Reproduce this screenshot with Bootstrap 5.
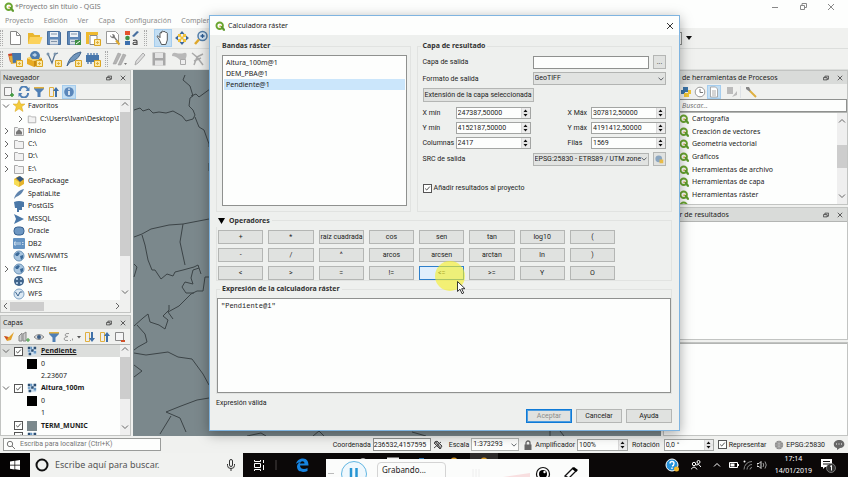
<!DOCTYPE html>
<html lang="es">
<head>
<meta charset="utf-8">
<meta name="viewport" content="width=device-width, initial-scale=1">
<title>*Proyecto sin título - QGIS</title>
<link rel="stylesheet" href="https://cdn.jsdelivr.net/npm/bootstrap@5.3.0/dist/css/bootstrap.min.css">
<style>
body{font-family:"Noto Sans","Open Sans",sans-serif;font-size:7px;line-height:12px;color:#1c1c1c;background:#f0f1ef}
svg{display:block;flex:none}
.ic{width:16px;height:16px}
.ic12{width:12px;height:12px}
.ic10{width:10px;height:10px}
button{font:inherit;color:inherit}
.plain{border:0;background:none;padding:0;display:flex;align-items:center;justify-content:center}
.on{background:#c3def3;outline:1px solid #a5cdee}
.app{height:100vh;display:flex;flex-direction:column;overflow:hidden}
.titlebar{height:14px;background:#fdfefd;color:#777;gap:1px}
.titlebar .winbtns{gap:18px}
.menus{height:14px;background:#fdfefd;gap:10px;padding-left:5px}
.menus a{color:#8b8b8b;text-decoration:none}
.tools{height:21px;border-bottom:1px solid #dcdedc}
.grip{width:3px;height:16px;border-left:1px dotted #aaa;border-right:1px dotted #aaa;flex:none}
.seven{width:133px}
.five{width:94px}
.g3{gap:3px}
.g2{gap:2px}
.work{display:grid;grid-template-columns:131px minmax(0,1fr) 185px;column-gap:2px}
.docks{display:grid;grid-template-rows:243fr 121fr;row-gap:2px}
.docks-r{display:grid;grid-template-rows:135fr 133fr 94fr;row-gap:2px}
.dock{display:flex;flex-direction:column;min-height:0;border:1px solid #c2c4c2}
.dockhead{height:13px;background:#d9dbd9;padding:0 4px 0 2px;flex:none}
.docktools{height:15px;flex:none;padding-left:2px}
.tree{display:flex;flex:1;min-height:0;background:#fdfefd;border-top:1px solid #b3b5b3}
.rows{flex:1;min-width:0;display:flex;flex-direction:column;overflow:hidden}
.rows>div{flex:1 1 0;display:flex;align-items:center;white-space:nowrap;min-height:0;gap:3px;padding-left:1px}
.rows>.sub{padding-left:15px;overflow:hidden}
.lay>div{gap:4px}
.lay>.cls{padding-left:26px}
.lay>.val{padding-left:40px}
.lay>.top{background:#dcdedc}
.rows>.cut{flex:0 0 3px;align-items:flex-start;overflow:hidden}
.alg>div{padding-left:15px}
.chev{width:8px;height:8px;stroke:#666;fill:none;stroke-width:1}
.chev.lite{stroke:#fff}
.gap8{width:8px;flex:none}
.vbar{width:10px;background:#efefef;display:flex;flex-direction:column;align-items:center;flex:none}
.vbar i{width:10px;background:#cdcdcd;display:block}
.hbar{height:12px;background:#f0f1ef;flex:none;padding:0 1px}
.hbar i{width:34px;height:9px;background:#cdcdcd}
.map{background:#7b888c;overflow:hidden}
.map svg{width:528px;height:366px}
.field{border:1px solid #8f918f;background-color:#fdfefd;font-size:7px;line-height:9px;padding:0 2px;border-radius:0;color:#1c1c1c;min-width:0;height:13px;min-height:0}
.form-select.field{background-color:#e1e3e1;border-color:#b2b4b2;background-size:6px 6px;background-position:right 1px center;background-repeat:no-repeat;padding:0 7px 0 1px}
.form-select.field.white{background-color:#fdfefd}
.spin{display:flex;border:1px solid #a3a5a3;background:#fdfefd;height:12px;min-width:0}
.spin input{border:0;flex:1;min-width:0;width:20px;padding:0 0 0 1px;background:none;font:inherit;line-height:10px;color:#1c1c1c}
.spin svg{width:9px;height:10px;background:#ececec}
.form-check-input.tick{width:9px;height:9px;border:1px solid #555;border-radius:0;margin:0;flex:none;background-color:#fdfefd}
.form-check-input.tick:checked{background-color:#fdfefd;border-color:#555;background-image:url("data:image/svg+xml,%3Csvg xmlns='http://www.w3.org/2000/svg' viewBox='0 0 9 9'%3E%3Cpath d='M1.5 4.5l2 2L7.5 2' fill='none' stroke='%23222' stroke-width='1'/%3E%3C/svg%3E")}
.status,.dlg{font-family:Roboto,"Liberation Sans",sans-serif}
.status input,.status select,.dlg input,.dlg select{font-family:inherit}
.status{height:17px;flex:none;padding:0 3px;background:#f0f1ef}
.w-co{width:58px}.w-es{width:48px}.w-am{width:51px}.w-ro{width:50px}
.ml2{margin-left:2px}.ml4{margin-left:4px}.ml6{margin-left:6px}.mr2{margin-right:2px}
.locator{width:158px;border-color:#9a9c9a}
.locator input,.search input{border:0;background:none;font:inherit;padding:0;min-width:0;flex:1;outline:0}
.search{padding-left:17px}
.taskbar{height:24px;flex:none;background:#0b0808;color:#fff}
.start{width:30px;background:#050303;height:24px}
.cortana{width:213px;background:#f1f2f0;color:#555;height:24px;font-size:9px;padding:0 8px 0 5px}
.cortana input{border:0;background:none;font:inherit;padding:0;min-width:0;flex:1}
.cortana input::placeholder{color:#555;opacity:1}
.divider{width:2px;height:10px;background:#2a2626;margin:0 18px 0 10px}
.dlg{position:absolute;left:209px;top:15px;width:471px;height:416px;border:1px solid #7fb4e0;background:#eef0ee;box-shadow:0 3px 12px rgba(0,0,0,.35);display:flex;flex-direction:column}
.dlghead{height:19px;background:#fdfefd;padding:0 5px;flex:none;gap:3px;font-family:"Noto Sans",sans-serif}
.dlgbody{padding:5px 7px 7px 6px;display:flex;flex-direction:column;flex:1;min-height:0}
.pair{display:grid;grid-template-columns:195fr 256fr;column-gap:6px;height:172px}
.grp{border:1px solid #e1e3e1;margin:6px 0 0;padding:0 5px;position:relative;display:flex;flex-direction:column;min-width:0}
.grp>h2{font-family:"Noto Sans",sans-serif;font-size:7px;font-weight:700;line-height:12px;margin:-7px auto 3px -2px;padding:0 2px;background:#eef0ee;color:#333}
.grp>h2.fold{margin-top:-10px;margin-left:-6px}
.grp>h2.inset{margin-left:3px}
.bands{background:#fdfefd;border:1px solid #8f918f;border-radius:0;flex:1;margin:0 -2px 5px 0;padding:1px}
.bands button{border:0;padding:0 2px;font-family:"Noto Sans",sans-serif;font-size:7px;line-height:10px;height:11px;background:none;color:#1c1c1c;text-align:left}
.bands button.sel{background:#cbe6fb}
.b7{border:1px solid #b4b6b4;background:#e0e2e0;border-radius:0;font-size:7px;line-height:10px;padding:0 1px;color:#1c1c1c;height:14px;white-space:nowrap}
.b7.sq{width:13px}
.b7.def{border:1px solid #0f7ad6;box-shadow:inset 0 0 0 1px #4c9de0;color:#8b8d8b}
.b7.hot{border-color:#2d7fcb;background:#e0effc}
.lab{width:110px;flex:none}
.fr{display:flex;align-items:center}
.up3{margin-top:3px}
.ext{display:grid;grid-template-columns:33px 75px minmax(0,1fr) 75px;row-gap:3px;align-items:center;margin-top:5px}
.ext .second{padding-left:37px;white-space:nowrap}
.ops{display:grid;grid-template-columns:repeat(8,minmax(0,1fr));gap:4px 5px;width:397px;margin-left:-4px}
.expr{font-family:"Liberation Mono",monospace;font-size:7px;line-height:9px;border:1px solid #8f918f;background:#fdfefd;resize:none;border-radius:0;padding:3px;flex:1;margin:0;min-height:0;color:#1c1c1c}
.actions button{width:46px}
.halo{position:absolute;left:225px;top:245px;width:30px;height:30px;border-radius:50%;background:rgba(246,240,40,.62);pointer-events:none}
.ptr{position:absolute;left:247px;top:265px;width:9px;height:14px}
.rec{position:absolute;left:326px;top:459px;width:263px;height:18px;overflow:hidden;background:#fbfcfb;display:flex;align-items:flex-start;color:#222;font-size:8px}
.recbox{border:1px solid #d4d4d4;border-radius:4px;width:69px;height:22px;margin:3px 0 0 9px;padding-left:4px;line-height:13px}
.recgrip{width:6px;height:6px;border-top:1px solid #bbb;border-bottom:1px solid #bbb;margin:14px 0 0 2px}
.clock{line-height:12px;text-align:center}
</style>
<script src="https://cdn.jsdelivr.net/npm/bootstrap@5.3.0/dist/js/bootstrap.bundle.min.js"></script>
</head>
<body>
<svg width="0" height="0" class="position-absolute" aria-hidden="true">
<defs>
<symbol id="q" viewBox="0 0 16 16"><circle cx="7.5" cy="7.5" r="5.2" fill="none" stroke="#6aa52f" stroke-width="3"/><path d="M8 8h3.500l4.500 5v2.500h-3z" fill="#5d9a2c"/><path d="M7 7l3.500 0-3.500 3.500z" fill="#e8a33a"/></symbol>
<symbol id="plus" viewBox="0 0 16 16"><path d="M9.500 9.500h6v6h-6z" fill="#fbe9a8" stroke="#dba520"/><path d="M12.500 11v3M11 12.500h3" stroke="#e0b040"/></symbol>
<symbol id="new" viewBox="0 0 16 16"><path d="M3.500 1.500h6l4 4v9h-10z" fill="#fff" stroke="#888"/><path d="M9.500 1.500v4h4" fill="none" stroke="#888"/></symbol>
<symbol id="open" viewBox="0 0 16 16"><path d="M1 3h5l1.500 2H13v9H1z" fill="#e9b62f"/><path d="M3 7h12.500L13 14H1z" fill="#fbd25c"/></symbol>
<symbol id="save" viewBox="0 0 16 16"><path d="M1.500 1.500h12l1 1v12h-13z" fill="#5f88b8" stroke="#466d9b"/><path d="M4 2h8v5H4z" fill="#eef3f8"/><path d="M4 9.500h8v5H4z" fill="#d9dfe6"/><path d="M5 4h6M5 11.500h6" stroke="#8294a8"/></symbol>
<symbol id="gsave" viewBox="0 0 16 16"><path d="M1.500 1.500h12l1 1v12h-13z" fill="#a8a8a8"/><path d="M4 2h8v5H4zM4 9.500h8v5H4z" fill="#e4e4e4"/></symbol>
<symbol id="folder" viewBox="0 0 12 12"><path d="M1.500 2.500h3l1 1h5v7h-9z" fill="#f2f2f2" stroke="#aaa"/></symbol>
<symbol id="filter" viewBox="0 0 12 12"><path d="M1 1h10v2L7.500 6.500V11l-3 0V6.500L1 3z" fill="#4f7fb5"/><path d="M1 1h10v1.500H1z" fill="#e0b040"/></symbol>
<symbol id="collapse" viewBox="0 0 12 12"><path d="M1.500 1.500h4v9h-4z" fill="#eee" stroke="#e0b040"/><path d="M8 1l3 4H9v6H7V5H5z" fill="#3f70a8"/></symbol>
<symbol id="expand" viewBox="0 0 12 12"><path d="M1.500 1.500h4v9h-4z" fill="#eee" stroke="#e0b040"/><path d="M8 11l3-4H9V1H7v6H5z" fill="#3f70a8"/></symbol>
<symbol id="addl" viewBox="0 0 12 12"><path d="M1.500 1.500h7v8h-7z" fill="#f5f5f5" stroke="#888"/><path d="M9 7v4M7 9h4" stroke="#3c9a3c" stroke-width="1.500"/></symbol>
<symbol id="rem" viewBox="0 0 12 12"><path d="M1.500 1.500h8v8h-8z" fill="#f5f5f5" stroke="#888"/><path d="M7 10h4" stroke="#d0502a" stroke-width="2"/></symbol>
<symbol id="globe" viewBox="0 0 12 12"><circle cx="6" cy="6" r="5" fill="#a9c6e0" stroke="#6d94b8"/><path d="M2 4l3-2 2 1-2 3-2 0zM7 6l3-1v3l-2 2z" fill="#3b6a99"/></symbol>
<symbol id="rst" viewBox="0 0 12 12"><path d="M1 1h10v10H1z" fill="#cfe0ee"/><path d="M1 1h3v3H1zM5 4h3v3H5zM8 1h3v3H8zM2 8h3v3H2z" fill="#2c4f74"/><path d="M4 1h2v3H4zM8 6h3v3H8zM1 5h3v2H1z" fill="#6797c4"/></symbol>
<symbol id="r" viewBox="0 0 8 8"><path d="M3 1l3 3-3 3"/></symbol>
<symbol id="d" viewBox="0 0 8 8"><path d="M1 2.500l3 3 3-3"/></symbol>
<symbol id="u" viewBox="0 0 8 8"><path d="M1 5.500l3-3 3 3"/></symbol>
<symbol id="l" viewBox="0 0 8 8"><path d="M5 1L2 4l3 3"/></symbol>
<symbol id="flt" viewBox="0 0 8 8"><path d="M2.500 1.500h5v4h-5z" fill="none" stroke="#333"/><path d="M.5 3.500h5v3h-5z" fill="#d9dbd9" stroke="#333"/></symbol>
<symbol id="x" viewBox="0 0 8 8"><path d="M1 1l6 6M7 1L1 7" stroke="#333" fill="none"/></symbol>
<symbol id="ud" viewBox="0 0 9 10"><path d="M4.500 1.500l2 2.500h-4zM4.500 8.500l2-2.500h-4z" fill="#111"/><path d="M.5 0v10M1 5h8" stroke="#ccc" stroke-width=".6"/></symbol>
</defs>
</svg>

<div class="app">
<header>
<div class="titlebar d-flex align-items-center ps-1">
<svg class="ic10"><use href="#q"/></svg><span>*Proyecto sin título - QGIS</span>
<div class="winbtns d-flex ms-auto pe-2 me-1">
<button class="plain" aria-label="Minimizar"><svg class="ic10" viewBox="0 0 10 10"><path d="M2 5.500h6" stroke="#888"/></svg></button>
<button class="plain" aria-label="Restaurar"><svg class="ic10" viewBox="0 0 10 10"><path d="M2.500 3.500h4v4h-4zM4 3V1.500h4.500v4H7" fill="none" stroke="#888"/></svg></button>
<button class="plain" aria-label="Cerrar"><svg class="ic10" viewBox="0 0 10 10"><path d="M2 2l6 6M8 2L2 8" stroke="#888"/></svg></button>
</div>
</div>
<nav class="menus d-flex align-items-center"><a href="#">Proyecto</a><a href="#">Edición</a><a href="#">Ver</a><a href="#">Capa</a><a href="#">Configuración</a><a href="#">Complementos</a></nav>
<div class="tools d-flex align-items-center">
<span class="grip me-1"></span>
<div class="seven d-flex justify-content-between">
<button class="plain" aria-label="Nuevo"><svg class="ic"><use href="#new"/></svg></button>
<button class="plain" aria-label="Abrir"><svg class="ic"><use href="#open"/></svg></button>
<button class="plain" aria-label="Guardar"><svg class="ic"><use href="#save"/></svg></button>
<button class="plain" aria-label="Guardar como"><svg class="ic" viewBox="0 0 16 16"><use href="#save" width="16" height="16"/><path d="M9 10h6v5H9z" fill="#3f8f45"/><path d="M10 14l4-3" stroke="#fff"/></svg></button>
<button class="plain" aria-label="Nueva composición"><svg class="ic" viewBox="0 0 16 16"><path d="M1 2h12v3H1z" fill="#efb92e"/><path d="M1 2h3v12H1z" fill="#efb92e"/><path d="M5 5.500h7v9H5z" fill="#fff" stroke="#888"/><use href="#plus" width="16" height="16"/></svg></button>
<button class="plain" aria-label="Administrador"><svg class="ic" viewBox="0 0 16 16"><path d="M1.500 1.500h9l3 3v9h-12z" fill="#fff" stroke="#999"/><path d="M5 5a3 3 0 004 3l4 5 1-1-4-5A3 3 0 007 4l1 2-1 1z" fill="#777"/><path d="M11 10.500l3.500 4" stroke="#e0a92c" stroke-width="2"/></svg></button>
<button class="plain" aria-label="Estilos"><svg class="ic" viewBox="0 0 16 16"><path d="M1 1h5v4H1z" fill="#e5532d"/><circle cx="3.500" cy="8" r="2.300" fill="#3f9143"/><path d="M1 11h5v4H1z" fill="#3c6fae"/><path d="M8 6l5-5 2 1-5 5z" fill="#476f9f"/><path d="M9 10.500q4-1 4 1v3.500M13 12q-4 0-4 1.600t4 .4" fill="none" stroke="#444" stroke-width="1.100"/></svg></button>
</div>
<span class="grip ms-1 me-1"></span>
<div class="d-flex g3 ps-1">
<button class="plain on" aria-label="Desplazar"><svg class="ic" viewBox="0 0 16 16"><path d="M4 9L2 6.500l1-.8 2 2V3l1-.5.700.5V1.500L8 1l.8.8L10 1.500l.7 1 1 0 .6.800V10l-1.500 4.500H6.500z" fill="#fff" stroke="#333" stroke-width=".8"/></svg></button>
<button class="plain" aria-label="Centrar"><svg class="ic" viewBox="0 0 16 16"><path d="M8 1l2.500 3h-5zM8 15l2.500-3h-5zM1 8l3-2.500v5zM15 8l-3-2.500v5z" fill="#3c689c"/><path d="M4 4h3v3H4zM9 4h3v3H9zM4 9h3v3H4zM9 9h3v3H9zM6.500 6.500h3v3h-3z" fill="#f0c23c"/></svg></button>
<button class="plain" aria-label="Acercar"><svg class="ic" viewBox="0 0 16 16"><circle cx="9.500" cy="6" r="4.500" fill="#d8e7f4" stroke="#5580aa" stroke-width="1.500"/><path d="M9.500 4v4M7.500 6h4" stroke="#2c5c92" stroke-width="1.300"/><path d="M6 9.500L2 14" stroke="#e0a92c" stroke-width="2.500"/></svg></button>
</div>
<div class="ms-auto me-5 pe-5 d-flex align-items-center"><span class="field d-block border-start-0 me-1"></span><button class="plain me-5 pe-2" aria-label="Más"><svg class="me-1" width="6" height="4" viewBox="0 0 6 4"><path d="M0 0h6L3 4z" fill="#111"/></svg></button></div>
</div>
<div class="tools d-flex align-items-center">
<span class="grip me-1"></span>
<div class="five d-flex justify-content-between">
<button class="plain" aria-label="Fuentes"><svg class="ic" viewBox="0 0 16 16"><path d="M1 3l6-1 2 8-6 1z" fill="#c9452b"/><path d="M2 5l8-1 1 8-7 1z" fill="#e4ac36"/><path d="M5 2l9 0v9l-8 1z" fill="#4776ab"/><use href="#plus" width="16" height="16"/></svg></button>
<button class="plain" aria-label="GeoPackage"><svg class="ic" viewBox="0 0 16 16"><path d="M0 7l7 3v6l-7-3z" fill="#e8ab22"/><path d="M7 10l8-3v6l-8 3z" fill="#c98a13"/><path d="M0 7l7-3 8 3-8 3z" fill="#f6d060"/><path d="M3 5a4.500 4.500 0 0110 0l-1 3H5z" fill="#4b79ab"/><path d="M5 4l3-2 2 2-2 2z" fill="#b8d0e6"/><use href="#plus" width="16" height="16"/></svg></button>
<button class="plain" aria-label="Shapefile"><svg class="ic" viewBox="0 0 16 16"><path d="M2 3l4 9 3-9 3-1" fill="none" stroke="#54708f" stroke-width="1.200"/><circle cx="2" cy="3" r="1.500" fill="#7c95ad"/><circle cx="9" cy="3" r="1.500" fill="#7c95ad"/><use href="#plus" width="16" height="16"/></svg></button>
<button class="plain" aria-label="SpatiaLite"><svg class="ic" viewBox="0 0 16 16"><path d="M1 15C3 7 8 2 15 1 13 7 9 10 4 11z" fill="#7096bd" stroke="#41648b"/><use href="#plus" width="16" height="16"/></svg></button>
<button class="plain" aria-label="Memoria"><svg class="ic" viewBox="0 0 16 16"><path d="M1 4h13v7H1z" fill="#4776ab"/><path d="M3 2v2M6 2v2M9 2v2M12 2v2M3 11v2M6 11v2" stroke="#4776ab" stroke-width="1.300"/><use href="#plus" width="16" height="16"/></svg></button>
</div>
<span class="grip ms-1 me-1"></span>
<div class="five d-flex justify-content-between">
<button class="plain" aria-label="Ediciones"><svg class="ic" viewBox="0 0 16 16"><path d="M1 13L6 2l3 1-5 10zM6 14l5-11 3 1-5 10z" fill="#b3b3b3" stroke="#999" stroke-width=".5"/><path d="M12 12h3l-1.500 2z" fill="#777"/></svg></button>
<button class="plain" aria-label="Editar"><svg class="ic" viewBox="0 0 16 16"><path d="M3 14l1-4 7-8 2 2-7 8z" fill="#ddd" stroke="#aaa"/></svg></button>
<button class="plain" aria-label="Guardar ediciones"><svg class="ic"><use href="#gsave"/></svg></button>
<button class="plain" aria-label="Añadir"><svg class="ic" viewBox="0 0 16 16"><path d="M1 5q0-4 4-3t8 0 2 5-6 2-8-4z" fill="#b8b8b8"/><path d="M9.500 8.500h5v5h-5z" fill="#eee" stroke="#aaa"/></svg></button>
<button class="plain" aria-label="Nodos"><svg class="ic" viewBox="0 0 16 16"><path d="M2 2l5 4 6-3M7 6l-3 8M7 6l6 8M11 7l-7 3" fill="none" stroke="#aaa" stroke-width="1.500"/></svg></button>
</div>
</div>
</header>

<main class="work flex-grow-1 overflow-hidden">
<div class="docks">
<section class="dock">
<div class="dockhead d-flex align-items-center"><span>Navegador</span><span class="ms-auto d-flex gap-2"><button class="plain" aria-label="Flotar"><svg width="6" height="6"><use href="#flt"/></svg></button><button class="plain" aria-label="Cerrar"><svg width="6" height="6"><use href="#x"/></svg></button></span></div>
<div class="docktools d-flex align-items-center g3">
<button class="plain" aria-label="Añadir"><svg class="ic12"><use href="#addl"/></svg></button>
<button class="plain" aria-label="Actualizar"><svg class="ic12" viewBox="0 0 12 12"><path d="M2 5a4 4 0 018-1M10 7a4 4 0 01-8 1" fill="none" stroke="#4f7fb5" stroke-width="2"/><path d="M11.500 1v4h-4zM.5 11V7h4z" fill="#4f7fb5"/></svg></button>
<button class="plain" aria-label="Filtrar"><svg class="ic12"><use href="#filter"/></svg></button>
<button class="plain" aria-label="Contraer"><svg class="ic12"><use href="#collapse"/></svg></button>
<button class="plain on" aria-label="Propiedades"><svg class="ic12" viewBox="0 0 12 12"><circle cx="6" cy="6" r="4.800" fill="#5b87bb"/><path d="M6 2.500v1.200M6 5v4" stroke="#fff" stroke-width="1.500"/></svg></button>
</div>
<div class="tree">
<div class="rows">
<div><svg class="chev"><use href="#d"/></svg><svg class="ic12" viewBox="0 0 12 12"><path d="M6 0l1.700 4H12L8.700 6.800 10 11.500 6 8.800 2 11.500l1.300-4.700L0 4h4.300z" fill="#f3cb3c" stroke="#d9a520" stroke-width=".5"/></svg>Favoritos</div>
<div class="sub"><svg class="chev"><use href="#r"/></svg><svg class="ic10"><use href="#folder"/></svg>C:\Users\Ivan\Desktop\I</div>
<div><svg class="chev"><use href="#r"/></svg><svg class="ic12" viewBox="0 0 12 12"><use href="#folder" width="12" height="12"/><path d="M3 7l3-3 3 3v2.500H3z" fill="#777"/></svg>Inicio</div>
<div><svg class="chev"><use href="#r"/></svg><svg class="ic12"><use href="#folder"/></svg>C:\</div>
<div><svg class="chev"><use href="#r"/></svg><svg class="ic12"><use href="#folder"/></svg>D:\</div>
<div><svg class="chev"><use href="#r"/></svg><svg class="ic12"><use href="#folder"/></svg>E:\</div>
<div><span class="gap8"></span><svg class="ic12" viewBox="0 0 12 12"><path d="M1 4l5-3 5 3v5l-5 3-5-3z" fill="#e5b32a"/><path d="M1 4l5 3v5l-5-3z" fill="#f6dd55"/><path d="M3 3l4-2 4 3-4 3z" fill="#35587f"/></svg>GeoPackage</div>
<div><span class="gap8"></span><svg class="ic12" viewBox="0 0 12 12"><path d="M1 11C2 6 6 2 11 1 9 6 6 8 3 9z" fill="#5f84ad"/></svg>SpatiaLite</div>
<div><span class="gap8"></span><svg class="ic12" viewBox="0 0 12 12"><path d="M1 2q5-2 10 0v5H9v3H6l0 2H4V8H2z" fill="#4a78a8"/></svg>PostGIS</div>
<div><span class="gap8"></span><svg class="ic12" viewBox="0 0 12 12"><path d="M1 1l10 5-10 5 2-5z" fill="#4a78a8"/></svg>MSSQL</div>
<div><span class="gap8"></span><svg class="ic12" viewBox="0 0 12 12"><rect x="1" y="2" width="10" height="8" rx="3.500" fill="#6d97c2" stroke="#355f8d"/></svg>Oracle</div>
<div><span class="gap8"></span><svg class="ic12" viewBox="0 0 12 12"><rect x="0" y="0" width="12" height="11" rx="1" fill="#6493c2"/><path d="M1.500 4v3h1.500V4zM5 4v3M7 4v3M9 4.500h1.500M9 6.500h1.500" fill="none" stroke="#dbe7f2" stroke-width=".8"/></svg>DB2</div>
<div><span class="gap8"></span><svg class="ic12"><use href="#globe"/></svg>WMS/WMTS</div>
<div><svg class="chev"><use href="#r"/></svg><svg class="ic12"><use href="#globe"/></svg>XYZ Tiles</div>
<div><span class="gap8"></span><svg class="ic12" viewBox="0 0 12 12"><circle cx="6" cy="6" r="5" fill="#3f648c"/><path d="M3 3h2v2H3zM7 3h2v2H7zM3 7h2v2H3zM7 7h2v2H7z" fill="#a9c4dd"/></svg>WCS</div>
<div><span class="gap8"></span><svg class="ic12" viewBox="0 0 12 12"><circle cx="6" cy="6" r="5" fill="#dbe8f3" stroke="#7fa3c5"/><path d="M2.500 4L5 8l2-4 2.500 0" fill="none" stroke="#3e668f"/></svg>WFS</div>
</div>
<div class="vbar"><svg class="chev mb-1"><use href="#u"/></svg><i class="flex-grow-1 mb-4"></i><svg class="chev mt-2 mb-1"><use href="#d"/></svg></div>
</div>
<div class="hbar d-flex align-items-center"><svg class="chev"><use href="#l"/></svg><i></i><svg class="chev ms-auto me-2"><use href="#r"/></svg></div>
</section>
<section class="dock">
<div class="dockhead d-flex align-items-center"><span>Capas</span><span class="ms-auto d-flex gap-2"><button class="plain" aria-label="Flotar"><svg width="6" height="6"><use href="#flt"/></svg></button><button class="plain" aria-label="Cerrar"><svg width="6" height="6"><use href="#x"/></svg></button></span></div>
<div class="docktools d-flex align-items-center g3">
<button class="plain" aria-label="Estilo"><svg class="ic12" viewBox="0 0 12 12"><path d="M1 5l5 1 5-5-3 8-4 1z" fill="#e2a22c"/><path d="M1 5l4 1-1 3z" fill="#c9452b"/></svg></button>
<button class="plain" aria-label="Grupo"><svg class="ic12" viewBox="0 0 12 12"><path d="M1 10V5l3-3v8zM5 10V3l3-2v9z" fill="#ccc" stroke="#888"/><path d="M10 7v4M8 9h4" stroke="#3c9a3c"/></svg></button>
<button class="plain" aria-label="Visibilidad"><svg class="ic12" viewBox="0 0 12 12"><path d="M1 6q5-5 10 0-5 5-10 0z" fill="#ddd" stroke="#888"/><circle cx="6" cy="6" r="2" fill="#3b5d84"/></svg></button>
<button class="plain" aria-label="Filtrar"><svg class="ic12"><use href="#filter"/></svg></button>
<button class="plain" aria-label="Expresión"><svg width="18" height="10" viewBox="0 0 18 10"><path d="M6 1.500Q2 1 2 3q0 1.500 3 1.500Q1 5 1 7t4 1.500M7 8.500h1M9.500 6.500v2" fill="none" stroke="#999"/><path d="M14 4h4l-2 2.500z" fill="#555"/></svg></button>
<button class="plain" aria-label="Expandir"><svg class="ic12"><use href="#expand"/></svg></button>
<button class="plain" aria-label="Contraer"><svg class="ic12"><use href="#collapse"/></svg></button>
<button class="plain" aria-label="Quitar"><svg class="ic12"><use href="#rem"/></svg></button>
</div>
<div class="tree">
<div class="rows lay">
<div class="top"><svg class="chev"><use href="#d"/></svg><input class="form-check-input tick" type="checkbox" checked aria-label="Pendiente"><svg class="ic10"><use href="#rst"/></svg><b class="text-decoration-underline">Pendiente</b></div>
<div class="cls"><svg class="ic10" viewBox="0 0 10 10"><path d="M0 0h10v10H0z"/></svg>0</div>
<div class="val">2.23607</div>
<div><svg class="chev"><use href="#d"/></svg><input class="form-check-input tick" type="checkbox" checked aria-label="Altura_100m"><svg class="ic10"><use href="#rst"/></svg><b>Altura_100m</b></div>
<div class="cls"><svg class="ic10" viewBox="0 0 10 10"><path d="M0 0h10v10H0z"/></svg>0</div>
<div class="val">1</div>
<div><span class="gap8"></span><input class="form-check-input tick" type="checkbox" checked aria-label="TERM_MUNIC"><svg class="ic10" viewBox="0 0 10 10"><path d="M0 0h10v10H0z" fill="#7b888c"/></svg><b>TERM_MUNIC</b></div>
<div class="cut"><span class="gap8"></span><input class="form-check-input tick" type="checkbox" checked aria-label="DEM_PBA"><svg class="ic10"><use href="#rst"/></svg></div>
</div>
<div class="vbar"><svg class="chev mb-1"><use href="#u"/></svg><i class="flex-grow-1 mb-4"></i><svg class="chev mb-1"><use href="#d"/></svg></div>
</div>
</section>
</div>

<div class="map"><svg viewBox="133 70 528 366" fill="none" stroke="#3c4447" stroke-width="1"><path d="M134 110l6-2 3 3 6-2 4 4 6-1 7 1 7-2 9 5 4 5 7-2 2-4-2-5-4-4 1-8 3-2-3-10-7-6 2-5M191 96l5-2 3 3 11-8M195 117l4 10 5 3 5 14v3M209 163v8M134 237l8-3 9-5 18-4 14-1 26-5M142 235l3 10 3 15 4 10 3 0 6 9 6-5 6 2 2-4 8-2 11-3 4-2 3 9M183 224l-3 18 5 23M199 268l-6 2-2 8 2 6-8-2-3 5 4 6 8 0M191 294l6-3 6 0 2-14h4M191 294l-12 12-11 6 5 7M134 264l3 3-3 10M134 326l9-8 5-4 2 8 9 3 6 4 3-9-5-4 6-6 0-5M137 325l8 9 2 8-9 5-4 3M134 353l12 2 22-3 10 5 14 2 11 15 6 11M134 365l8 6-8 6M166 412l15-6 16-6 12-2M166 412l14 6 6 14M171 416l-11 18M247 436l14-3 5 3M313 436l6-5 5 5M412 432l14 4M550 431v5M560 431l4 5"/></svg></div>

<div class="docks-r">
<section class="dock">
<div class="dockhead d-flex align-items-center"><span>Caja de herramientas de Procesos</span><span class="ms-auto d-flex gap-2"><button class="plain" aria-label="Flotar"><svg width="6" height="6"><use href="#flt"/></svg></button><button class="plain" aria-label="Cerrar"><svg width="6" height="6"><use href="#x"/></svg></button></span></div>
<div class="docktools d-flex align-items-center g2 ps-3">
<button class="plain" aria-label="Python"><svg class="ic12" viewBox="0 0 12 12"><path d="M3 1h5v5H5v2H1V4h2z" fill="#3c74a8"/><path d="M8 4h3v4H9v3H4V7h4z" fill="#f1c638"/></svg></button>
<button class="plain" aria-label="Historial"><svg class="ic12" viewBox="0 0 12 12"><circle cx="6" cy="6" r="4.800" fill="#fff" stroke="#999"/><path d="M6 3v3.500h3" fill="none" stroke="#777"/></svg></button>
<button class="plain on" aria-label="Resultados"><svg class="ic12" viewBox="0 0 12 12"><path d="M2.500 1h5l2 2v8h-7z" fill="#fff" stroke="#999" stroke-width=".8"/><path d="M4 5h4M4 7h4M4 9h4" stroke="#aaa"/></svg></button>
<button class="plain ms-1" aria-label="Editar"><svg class="ic12" viewBox="0 0 12 12"><path d="M1 1h6v7H1zM6 11l5-6v4z" fill="#bbb"/></svg></button>
<button class="plain border-start ps-1" aria-label="Opciones"><svg class="ic12" viewBox="0 0 12 12"><path d="M1 1l3 0 2 4-1 1-4-3z" fill="#888"/><path d="M5 5l6 6" stroke="#e0b040" stroke-width="2"/></svg></button>
</div>
<label class="search field d-flex flex-shrink-0"><input class="fst-italic" placeholder="Buscar..." aria-label="Buscar"></label>
<div class="tree">
<div class="rows alg">
<div><svg class="ic10"><use href="#q"/></svg>Cartografía</div>
<div><svg class="ic10"><use href="#q"/></svg>Creación de vectores</div>
<div><svg class="ic10"><use href="#q"/></svg>Geometría vectorial</div>
<div><svg class="ic10"><use href="#q"/></svg>Gráficos</div>
<div><svg class="ic10"><use href="#q"/></svg>Herramientas de archivo</div>
<div><svg class="ic10"><use href="#q"/></svg>Herramientas de capa</div>
<div><svg class="ic10"><use href="#q"/></svg>Herramientas ráster</div>
<div class="cut"><svg class="ic10"><use href="#q"/></svg>Interpolación</div>
</div>
<div class="vbar"><svg class="chev my-1"><use href="#u"/></svg><i class="mt-3 h-25"></i><svg class="chev mt-auto mb-1"><use href="#d"/></svg></div>
</div>
</section>
<section class="dock">
<div class="dockhead d-flex align-items-center"><span>Visor de resultados</span><span class="ms-auto d-flex gap-2"><button class="plain" aria-label="Flotar"><svg width="6" height="6"><use href="#flt"/></svg></button><button class="plain" aria-label="Cerrar"><svg width="6" height="6"><use href="#x"/></svg></button></span></div>
<div class="tree"></div>
</section>
<section class="dock"><div class="tree"></div></section>
</div>
</main>

<footer>
<div class="status d-flex align-items-center">
<label class="locator field d-flex align-items-center"><svg class="ic10 me-1" viewBox="0 0 10 10"><circle cx="4" cy="4" r="2.700" fill="none" stroke="#777"/><path d="M6 6l3 3" stroke="#777"/></svg><input placeholder="Escriba para localizar (Ctrl+K)" aria-label="Localizar"></label>
<label class="ms-auto mr2" for="co">Coordenada</label><input id="co" class="field w-co px-0" value="236532,4157595">
<svg class="ic10 ml2" viewBox="0 0 10 10"><path d="M1 3l3-2 5 5-2 3zM1 8l7-6M2 1l6 8" stroke="#444" fill="#bbb"/></svg>
<label class="ml6 mr2" for="es">Escala</label><select id="es" class="form-select field white w-es"><option>1:373293</option></select>
<svg class="ml4 mr2 ic10" viewBox="0 0 10 10"><path d="M1.500 4.500h7V10h-7z" fill="#666"/><path d="M3 5V3a2 2 0 014 0v2" fill="none" stroke="#666" stroke-width="1.300"/></svg>
<label class="mr2" for="am">Amplificador</label><span class="spin w-am"><input id="am" value="100%"><svg><use href="#ud"/></svg></span>
<label class="ml4" for="ro">Rotación</label><span class="spin ml4 w-ro"><input id="ro" value="0,0 °"><svg><use href="#ud"/></svg></span>
<input id="re" class="form-check-input tick ms-1" type="checkbox" checked><label for="re" class="ml2">Representar</label>
<button class="plain ms-2 g2"><svg class="ic10" viewBox="0 0 10 10"><circle cx="5" cy="5" r="4.200" fill="#888"/><path d="M1 5h8M5 1v8M2 2.500q3 2 6 0M2 7.500q3-2 6 0" stroke="#ccc" stroke-width=".6" fill="none"/></svg>EPSG:25830</button>
<button class="plain ms-2" aria-label="Mensajes"><svg class="ic12" viewBox="0 0 12 12"><path d="M6 1c7 0 7 8 1 8l-3 2V9C-1 8 0 1 6 1z" fill="#666"/><path d="M3 5h1M5.500 5h1M8 5h1" stroke="#fff"/></svg></button>
</div>
<div class="taskbar d-flex align-items-center">
<button class="plain start" aria-label="Inicio"><svg class="ic10" viewBox="0 0 10 10"><path d="M0 1.500l4.500-.7v4H0zM5.200.7L10 0v4.800H5.200zM0 5.500h4.500v4L0 8.800zM5.200 5.500H10V10l-4.800-.7z" fill="#fff"/></svg></button>
<label class="cortana d-flex align-items-center"><svg width="14" height="14" viewBox="0 0 14 14"><circle cx="7" cy="7" r="5.500" fill="none" stroke="#111" stroke-width="2"/></svg><input class="ml6" placeholder="Escribe aquí para buscar." aria-label="Buscar en Windows"><svg width="8" height="12" viewBox="0 0 8 12"><rect x="2.500" y=".5" width="3" height="7" rx="1.500" fill="none" stroke="#333"/><path d="M.5 5v1.500a3.500 3 0 007 0V5M4 9.500V12" fill="none" stroke="#333"/></svg></label>
<button class="plain ml6 ps-1" aria-label="Vista de tareas"><svg class="ic12" viewBox="0 0 12 12"><path d="M1.500 4.500h6v4h-6zM1.500 1v1.500h6V1M1.500 12v-1.500h6V12M10.500 1v3M10.500 6v5" fill="none" stroke="#fff"/></svg></button>
<span class="divider"></span>
<button class="plain" aria-label="Edge"><svg width="14" height="14" viewBox="0 0 14 14"><path d="M1 6C2 2 5 .5 8 .5c4 0 5.500 3 5.500 7H5c0 4 5 4 7.500 2.500v3C8 15 2 14 2 8.500 2 6 4 4.500 6 4 4 4 2 5 1 6zM5 5.500h4.500C9.500 2.500 5.500 2.500 5 5.500z" fill="#1583e0"/></svg></button>
<svg width="190" height="24" viewBox="0 0 190 24"><circle cx="54" cy="8" r="3" fill="#aaa"/><path d="M78 4.500h12v8H78z" fill="#eee"/><path d="M110 5h5v3h-5z" fill="#2a6fa8"/><path d="M161 0h28v24h-28z" fill="#2d2a2a"/><circle cx="145" cy="8" r="3.500" fill="#d99a26"/><circle cx="175" cy="8" r="3.500" fill="#d99a26"/></svg>
<div class="ms-auto d-flex align-items-center gap-1 pe-1">
<svg width="14" height="14" viewBox="0 0 14 14"><circle cx="7" cy="7" r="6" fill="#2592da" stroke="#fff"/><path d="M5 5.500q0-2 2-2t2 2-2 2.500M7 9.500V11" fill="none" stroke="#fff" stroke-width="1.400"/><circle cx="11.500" cy="11" r="2.500" fill="#f3b92d"/></svg>
<svg class="ic10 mx-2" viewBox="0 0 10 10"><circle cx="3" cy="4" r="1.700" fill="none" stroke="#fff"/><path d="M0 9.500q3-5 6 0M5 5q3-2 5 2" fill="none" stroke="#fff"/><circle cx="7.500" cy="2" r="1.500" fill="none" stroke="#fff"/></svg>
<svg class="chev lite me-1"><use href="#u"/></svg>
<svg class="ic10" viewBox="0 0 10 10"><path d="M.5 2.500h8v5h-8zM9.500 4v2" fill="none" stroke="#fff"/><path d="M1.500 3.500h4v3h-4z" fill="#fff"/></svg>
<svg class="ic10" viewBox="0 0 10 10"><path d="M1 9.500A8 8 0 019 1.500M4 9.500a5 5 0 015-5M7 9.500a2 2 0 012-2" fill="none" stroke="#888"/><circle cx="1.500" cy="1.500" r="1" fill="#fff"/></svg>
<svg class="ic10" viewBox="0 0 10 10"><path d="M0 3.500h2L4 1.500v7L2 6.500H0z" fill="none" stroke="#ddd"/><path d="M6 3q1.500 2 0 4M8 1.500q2.500 3.500 0 7" fill="none" stroke="#999"/></svg>
<div class="clock mx-1">17:14<br>14/01/2019</div>
<svg class="me-2" width="16" height="16" viewBox="0 0 16 16"><path d="M1 2h11v8H5l-2 2v-2H1z" fill="#fff"/><path d="M3 4.500h7M3 7h7" stroke="#111"/><circle cx="11" cy="11" r="4.500" fill="#333" stroke="#999" stroke-width=".7"/><path d="M10 9.500l1.500-1v5" fill="none" stroke="#fff"/></svg>
</div>
</div>
</footer>
</div>

<div class="dlg" role="dialog" aria-label="Calculadora ráster">
<div class="dlghead d-flex align-items-center"><svg class="ic10"><use href="#q"/></svg>Calculadora ráster<button class="plain ms-auto" aria-label="Cerrar"><svg width="8" height="8"><use href="#x"/></svg></button></div>
<div class="dlgbody">
<div class="pair">
<section class="grp"><h2>Bandas ráster</h2>
<div class="bands d-flex flex-column"><button>Altura_100m@1</button><button>DEM_PBA@1</button><button class="sel">Pendiente@1</button></div></section>
<section class="grp"><h2>Capa de resultado</h2>
<div class="fr"><label class="lab" for="cs">Capa de salida</label><input id="cs" class="field flex-grow-1 me-1"><button class="b7 sq">...</button></div>
<div class="fr up3"><label class="lab" for="fs">Formato de salida</label><select id="fs" class="form-select field flex-grow-1"><option>GeoTIFF</option></select></div>
<button class="b7 align-self-start up3">Extensión de la capa seleccionada</button>
<div class="ext">
<label for="x1">X mín</label><span class="spin"><input id="x1" value="247387,50000"><svg><use href="#ud"/></svg></span><label for="x2" class="second">X Máx</label><span class="spin"><input id="x2" value="307812,50000"><svg><use href="#ud"/></svg></span>
<label for="y1">Y mín</label><span class="spin"><input id="y1" value="4152187,50000"><svg><use href="#ud"/></svg></span><label for="y2" class="second">Y máx</label><span class="spin"><input id="y2" value="4191412,50000"><svg><use href="#ud"/></svg></span>
<label for="c1">Columnas</label><span class="spin"><input id="c1" value="2417"><svg><use href="#ud"/></svg></span><label for="c2" class="second">Filas</label><span class="spin"><input id="c2" value="1569"><svg><use href="#ud"/></svg></span>
</div>
<div class="fr up3"><label class="lab" for="sr">SRC de salida</label><select id="sr" class="form-select field flex-grow-1 me-1"><option>EPSG:25830 - ETRS89 / UTM zone</option></select><button class="b7 sq d-flex align-items-center" aria-label="Elegir SRC"><svg width="9" height="9" viewBox="0 0 12 12"><circle cx="5" cy="5" r="4.500" fill="#8ba6c0"/><path d="M6 6h5v5H6z" fill="#e8bb48"/></svg></button></div>
<div class="fr mt-3"><input id="ad" type="checkbox" checked class="form-check-input tick"><label for="ad" class="ml2">Añadir resultados al proyecto</label></div>
</section>
</div>
<section class="grp mt-2 pt-1"><h2 class="fold d-flex align-items-center gap-1"><svg width="7" height="6" viewBox="0 0 7 6"><path d="M0 0h7L3.500 6z"/></svg>Operadores</h2>
<div class="ops">
<button class="b7">+</button><button class="b7">*</button><button class="b7">raíz cuadrada</button><button class="b7">cos</button><button class="b7">sen</button><button class="b7">tan</button><button class="b7">log10</button><button class="b7">(</button>
<button class="b7">-</button><button class="b7">/</button><button class="b7">^</button><button class="b7">arcos</button><button class="b7">arcsen</button><button class="b7">arctan</button><button class="b7">ln</button><button class="b7">)</button>
<button class="b7">&lt;</button><button class="b7">&gt;</button><button class="b7">=</button><button class="b7">!=</button><button class="b7 hot">&lt;=</button><button class="b7">&gt;=</button><button class="b7">Y</button><button class="b7">O</button>
</div></section>
<section class="grp mt-2 p-0 flex-grow-1"><h2 class="inset">Expresión de la calculadora ráster</h2>
<textarea class="expr" aria-label="Expresión" spellcheck="false">"Pendiente@1"</textarea></section>
<div class="up3">Expresión válida</div>
<div class="actions d-flex justify-content-end gap-1"><button class="b7 def">Aceptar</button><button class="b7">Cancelar</button><button class="b7">Ayuda</button></div>
</div>
<div class="halo"></div>
<svg class="ptr" viewBox="0 0 9 14"><path d="M.5.5v10l2.500-2.300 2 4.500 1.700-.8-2-4.200H8z" fill="#fff" stroke="#222" stroke-width=".9"/></svg>
</div>

<div class="rec">
<span class="recgrip"></span>
<svg class="ml6" width="28" height="28" viewBox="0 0 28 28"><circle cx="14" cy="15" r="12.500" fill="#eff8fd" stroke="#62b6e2"/><path d="M11 9v14M16.500 9v14" stroke="#2795d3" stroke-width="2.500"/></svg>
<div class="recbox">Grabando...</div>
<svg class="ms-auto" width="120" height="18" viewBox="0 0 120 18"><path d="M4 10v8M7 10v8M10 10v8" stroke="#eee"/><path d="M34 18l27-4v4z" fill="#f8dfe0"/><circle cx="74" cy="15" r="6.500" fill="#fff" stroke="#111" stroke-width="1.200"/><circle cx="74" cy="15" r="4"/><circle cx="75.500" cy="13" r="1.200" fill="#fff"/><path d="M96 17l8-8 3 3-7 7z" fill="#fff" stroke="#111" stroke-width="1.300"/><path d="M103 10l2-2 4 3-2 2z"/></svg>
</div>
</body>
</html>
